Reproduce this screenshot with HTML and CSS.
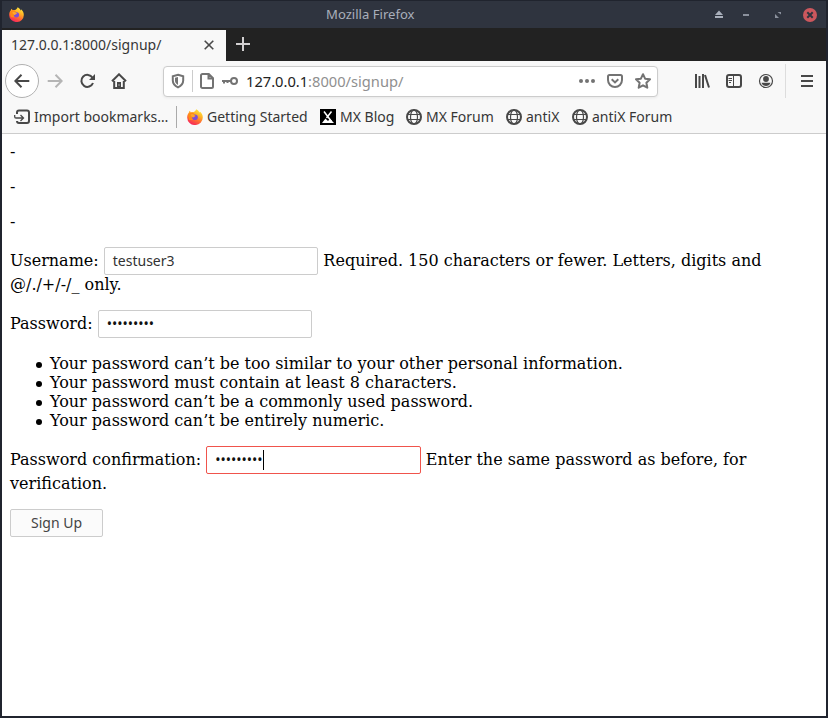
FILE: index.html
```html
<!DOCTYPE html>
<html lang="en">
<head>
<meta charset="utf-8">
<title>Mozilla Firefox</title>
<link rel="stylesheet" href="styles.css">
</head>
<body>
<svg class="defs" width="0" height="0">
  <defs>
    <linearGradient id="flame" x1="0.8" y1="0" x2="0.3" y2="1">
      <stop offset="0" stop-color="#fff044"/><stop offset="0.35" stop-color="#ffb526"/><stop offset="0.65" stop-color="#ff6a33"/><stop offset="1" stop-color="#f5205e"/>
    </linearGradient>
    <symbol id="firefox" viewBox="0 0 16 16">
      <path fill="url(#flame)" d="M9.2.2c1.8.8 2.800 2.100 3.200 3.400.5-.1.5-.7.400-1.200 2 1.500 3 3.800 3 6a7.800 7.500 0 0 1-15.600.3C.1 6.300 1 4.500 2.100 3.200L2.400 1.800c.7.4 1.200 1 1.500 1.700.7-.3 1.500-.3 2.200-.2C7.600 2.800 8.700 1.700 9.200.2z"/>
      <path fill="#ff8a16" d="M1 6c1-2 3-3 5-2.400L7.500 5 5 7.500 6 11 2 11z"/>
      <circle cx="8" cy="8.300" r="2.800" fill="#7b4fd8"/>
      <path fill="#ffa62b" d="M3.500 5.500C5 4.500 6.500 5 7.500 6.200c.7.100 1 .3.900.700-.5.900-1.800.7-2 1.700C5.400 8.500 4 7.500 3.500 5.500z"/>
    </symbol>
    <symbol id="globe" viewBox="0 0 16 16">
      <g fill="none" stroke="#484848"><circle cx="8" cy="8" r="7" stroke-width="2"/><ellipse cx="8" cy="8" rx="3.500" ry="7" stroke-width="1.200"/><path stroke-width="1.200" d="M1.500 5.500h13M1.500 10.500h13"/></g>
    </symbol>
  </defs>
</svg>
<div class="window">
  <header class="titlebar">
    <svg class="app-icon" width="15" height="15"><use href="#firefox"/></svg>
    <span class="window-title">Mozilla Firefox</span>
    <svg class="window-controls" width="108" height="18" viewBox="0 0 108 18">
      <path fill="#a9afbb" d="M5 9l4-4.500L13 9zM5 10h8v2H5z"/><path fill="#8b919d" d="M33 8h6v2h-6zM67.500 6H71v2.500zM65 8v4h4z"/>
      <circle cx="100" cy="9" r="7" fill="#cc575d"/><path stroke="#2f343f" stroke-width="2" d="M97.300 6.300l5.400 5.400M102.700 6.300l-5.400 5.400"/>
    </svg>
  </header>
  <div class="tabs">
    <div class="tab"><span>127.0.0.1:8000/signup/</span>
      <svg width="10" height="10" viewBox="0 0 10 10"><path d="M.7.7l8.600 8.600M9.300.7L.7 9.300" stroke="#4a4a4a" stroke-width="1.600"/></svg>
    </div>
    <svg class="new-tab" width="14" height="14" viewBox="0 0 14 14"><path d="M7 0v14M0 7h14" stroke="#d2d0d1" stroke-width="2"/></svg>
  </div>
  <nav class="toolbar">
    <div class="back"><svg width="16" height="16" viewBox="0 0 16 16"><path class="line" d="M15.300 8H1.500M7.500 1.800L1.300 8l6.200 6.200"/></svg></div>
    <svg class="forward" width="16" height="16" viewBox="0 0 16 16"><path class="line faded" d="M.7 8h13.800M8.500 1.800L14.700 8l-6.200 6.200"/></svg>
    <svg class="reload" width="16" height="16" viewBox="0 0 16 16"><path class="line" d="M12.500 4.700A6 6 0 1 0 13 10"/><path fill="#484848" d="M15 1v6H9z"/></svg>
    <svg class="home" width="16" height="16" viewBox="0 0 16 16"><path class="line" d="M1 8.300L8 1.300l7 7M3.200 8v7h9.600V8"/><path fill="#484848" d="M6 9h4v6H6z"/><path fill="#f8f8f8" d="M7.500 11.500h1v1h-1z"/></svg>
    <div class="urlbar">
      <svg class="shield" width="14" height="16" viewBox="0 0 14 16"><path class="grey" d="M7 1.800l5.200 1.500v4.200c0 3.100-2 5.300-5.200 6.800-3.200-1.500-5.200-3.700-5.200-6.800V3.300z"/><path fill="#737373" d="M7 4v8C5 10.800 4 9.500 4 7.500V4.800z"/></svg>
      <i class="url-sep"></i>
      <svg class="page-icon" width="14" height="16" viewBox="0 0 14 16"><path class="grey" d="M2.500 1h6.300L13 5.200v8.300c0 .9-.6 1.500-1.500 1.500h-9C1.600 15 1 14.400 1 13.500v-11C1 1.600 1.600 1 2.500 1zM8.500 1v4.500H13"/></svg>
      <svg class="key" width="16" height="16" viewBox="0 0 16 16"><g class="grey"><circle cx="12" cy="8" r="3"/><path d="M9 8H0M2 8v2.500M5.500 8v2"/></g></svg>
      <span class="address"><b>127.0.0.1</b>:8000/signup/</span>
      <svg width="16" height="16" viewBox="0 0 16 16"><g fill="#737373"><circle cx="2" cy="8" r="2"/><circle cx="8" cy="8" r="2"/><circle cx="14" cy="8" r="2"/></g></svg>
      <svg width="16" height="16" viewBox="0 0 16 16"><path class="grey" d="M2.500 2h11c.9 0 1.500.6 1.500 1.500V7A7 7 0 0 1 1 7V3.500C1 2.600 1.600 2 2.500 2zM4.700 6.200L8 9.400l3.300-3.200"/></svg>
      <svg width="16" height="16" viewBox="0 0 16 16"><path class="grey" stroke-linejoin="round" d="M8 1.200l2.100 4.500 4.900.6-3.600 3.400.9 5L8 12.300l-4.300 2.400.9-5L1 6.300l4.900-.6z"/></svg>
    </div>
    <svg class="library" width="16" height="16" viewBox="0 0 16 16"><path class="line" d="M2 1v14M5.500 3v12M9 1v14M11 2l4 12.500"/></svg>
    <svg class="sidebar" width="16" height="16" viewBox="0 0 16 16"><rect class="line" x="1" y="2" width="14" height="12" rx="2"/><path stroke="#484848" d="M7.500 2v12M2.500 5.500h3.500M2.500 7.500h3.500M3 9.500h2"/></svg>
    <svg class="account" width="16" height="16" viewBox="0 0 16 16"><circle cx="8" cy="8" r="6.500" fill="none" stroke="#484848" stroke-width="1.200"/><circle cx="8" cy="6" r="2.900" fill="#484848"/><path fill="#484848" d="M3.500 9.700h9C11.800 12 10 13 8 13s-3.800-1-4.500-3.300z"/></svg>
    <i class="menu-sep"></i>
    <svg class="menu" width="14" height="14" viewBox="0 0 14 14"><path class="line" d="M1 2h12M1 7h12M1 12h12"/></svg>
  </nav>
  <div class="bookmarks">
    <a class="import"><svg width="16" height="16" viewBox="0 0 16 16"><path class="line" d="M3 5V3.500C3 2 3.800 1.500 5 1.500h8c1.200 0 2 .7 2 2v8.500c0 1.200-.8 2-2 2H5c-1.200 0-2-.7-2-2"/><path fill="none" stroke="#484848" stroke-width="1.300" d="M.7 6v1.700c0 .8.500 1.300 1.300 1.300h7M6.500 6l3 3-3 3"/></svg>Import bookmarks…</a>
    <i class="mark-sep"></i>
    <a class="started"><svg width="16" height="16"><use href="#firefox"/></svg>Getting Started</a>
    <a class="blog"><svg width="16" height="16" viewBox="0 0 16 16"><path fill="#000" d="M0 0h16v16H0z"/><path fill="#fff" d="M2 14l3.500-4.500L8 12l2-2.300 4 4.300z"/><path d="M4 2.500l7.500 10M11.500 2.500L6.500 9" stroke="#fff" stroke-width="1.500"/></svg>MX Blog</a>
    <a class="forum"><svg width="16" height="16"><use href="#globe"/></svg>MX Forum</a>
    <a class="antix"><svg width="16" height="16"><use href="#globe"/></svg>antiX</a>
    <a class="antix-forum"><svg width="16" height="16"><use href="#globe"/></svg>antiX Forum</a>
  </div>
  <main class="page">
    <p>-</p>
    <p>-</p>
    <p>-</p>
    <p>Username: <span class="field username">testuser3</span> Required. 150 characters or fewer. Letters, digits and @/./+/-/_ only.</p>
    <p>Password: <span class="field secret">•••••••••</span></p>
    <ul>
      <li>Your password can’t be too similar to your other personal information.</li>
      <li>Your password must contain at least 8 characters.</li>
      <li>Your password can’t be a commonly used password.</li>
      <li>Your password can’t be entirely numeric.</li>
    </ul>
    <p>Password confirmation: <span class="field secret focused">•••••••••<i class="caret"></i></span> Enter the same password as before, for verification.</p>
    <button class="submit">Sign Up</button>
  </main>
</div>
</body>
</html>
```
FILE: styles.css
```css
* { box-sizing: border-box; }
body { margin: 0; font: 14px/20px "Noto Sans", sans-serif; color: #363636; }
.defs { position: absolute; }
svg { display: block; flex: none; }
.window { width: 828px; height: 718px; border: solid #20242e; border-width: 0 2px 2px; background: #fff; overflow: hidden; }
.titlebar { height: 28px; display: flex; align-items: center; background: #2f343f; border-top: 1px solid #20242e; color: #a9afbb; font-size: 13.1px; }
.app-icon { margin: -1px 0 0 7px; }
.window-title { margin: -1px 0 0 302px; }
.window-controls { margin-left: auto; margin-right: 8px; }
.tabs { height: 33px; display: flex; align-items: center; background: #222; }
.tab { align-self: stretch; width: 224px; margin-top: 2px; padding: 0 12px 2px 9px; display: flex; justify-content: space-between; align-items: center; background: #f8f8f8; }
.new-tab { margin: 0 0 1px 10px; }
.toolbar { height: 40px; display: flex; align-items: center; background: #f8f8f8; }
.line { fill: none; stroke: #484848; stroke-width: 2; }
.faded { stroke: #b5b5b5; }
.grey { fill: none; stroke: #737373; stroke-width: 2; }
.back { width: 34px; height: 34px; margin-left: 3px; border: 1px solid #b1b1b1; border-radius: 50%; background: #fff; display: flex; align-items: center; justify-content: center; }
.forward { margin-left: 8px; }
.reload { margin-left: 17px; }
.home { margin-left: 15px; }
.urlbar { width: 495px; height: 31px; margin-left: 36px; padding: 0 6px 0 7px; display: flex; align-items: center; border: 1px solid #ccc; border-radius: 4px; background: #fff; box-shadow: 0 1px 3px #0001; }
.url-sep { width: 1px; height: 22px; margin: 0 7px; background: #ccc; }
.key { margin: 0 8px; }
.address { margin-right: auto; padding-bottom: 1px; color: #8f8f8f; font-size: 14.67px; }
.address b { font-weight: 400; color: #222; }
.address ~ svg { margin-left: 12px; }
.library { margin-left: 36px; }
.sidebar, .account { margin-left: 16px; }
.menu-sep { width: 1px; height: 34px; margin: 0 14px 0 11px; background: #ddd; }
.bookmarks { height: 33px; display: flex; align-items: center; background: #f8f8f8; border-bottom: 1px solid #ccc; }
.bookmarks a { display: flex; align-items: center; gap: 4px; white-space: nowrap; }
.import { width: 162px; padding-left: 12px; }
.mark-sep { width: 1px; height: 22px; margin: 0 10px 0 12px; background: #aaa; }
.started { width: 133px; }
.blog { width: 86px; }
.forum { width: 100px; }
.antix { width: 66px; }
.page { padding: 8px; color: #000; font: 16px/19px "DejaVu Serif", serif; }
.page p { margin: 0 0 16px; }
.page ul { margin: 0 0 16px; padding-left: 26px; list-style: none; }
.page li { display: flex; align-items: center; gap: 8px; }
.page li::before { content: ""; width: 6px; height: 6px; margin-top: 2px; border-radius: 50%; background: #000; }
.field { display: inline-block; width: 214px; height: 28px; padding: 3px 8px; border: 1px solid #ccc; border-radius: 2px; font: 14px/20px "Noto Sans", sans-serif; color: #333; white-space: nowrap; }
.username { margin-right: 0.5px; }
.secret { color: #111; }
.focused { width: 215px; margin-right: -0.5px; border-color: #f0544c; }
.caret { display: inline-block; width: 1px; height: 20px; background: #000; vertical-align: top; }
.submit { display: block; width: 93px; height: 28px; padding: 0; border: 1px solid #ccc; border-radius: 2px; background: #fbfbfb; font: 14px/20px "Noto Sans", sans-serif; color: #444; }
```
